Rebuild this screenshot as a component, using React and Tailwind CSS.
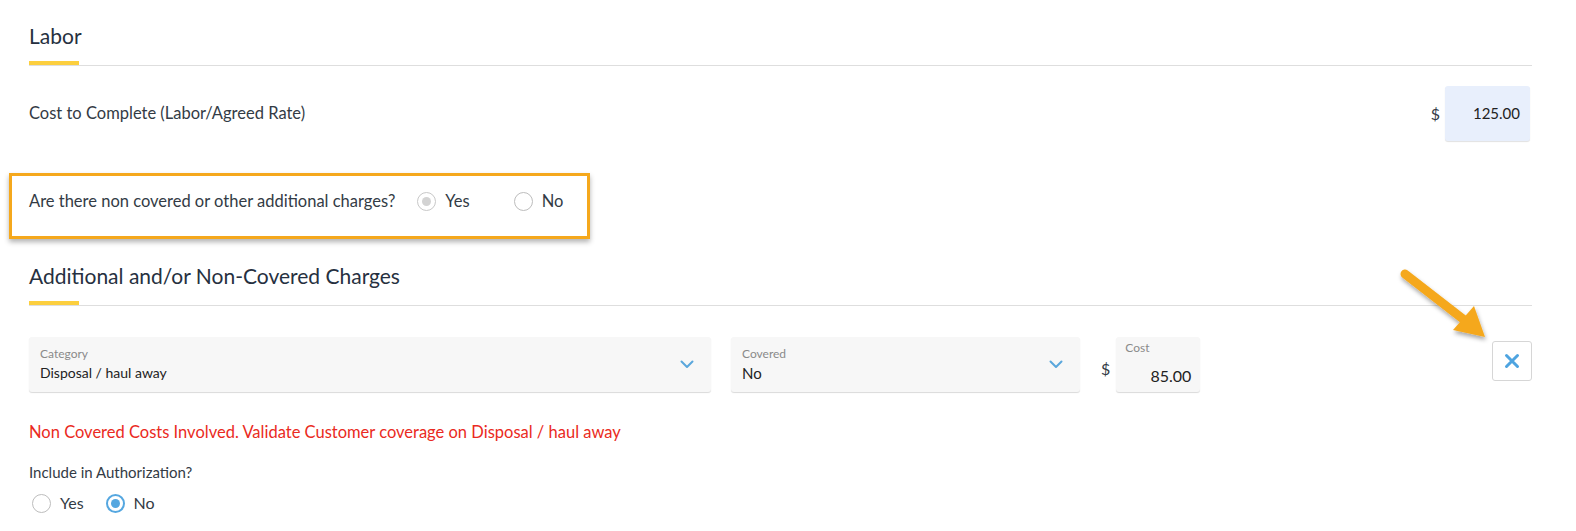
import React from "react";

const font = { fontFamily: "Lato, 'Open Sans', sans-serif" };

function Chevron() {
  return (
    <svg width="14" height="9" viewBox="0 0 14 9" fill="none">
      <path d="M1.5 1.5 L7 7 L12.5 1.5" stroke="#5aa7dc" strokeWidth="2" strokeLinecap="round" strokeLinejoin="round" />
    </svg>
  );
}

function SectionHeader({ title }) {
  return (
    <div>
      <div className="text-[21px] leading-[26px] text-[#263040]">{title}</div>
      <div className="mt-[12px] h-[4px] w-[50px] bg-[#fccf3e]" />
      <div className="h-px bg-[#dedede]" />
    </div>
  );
}

function Radio({ state, label, size }) {
  let circle;
  if (state === "disabled") {
    circle = (
      <span className="flex h-[19px] w-[19px] items-center justify-center rounded-full border-[1.5px] border-[#c8c8c8] bg-white">
        <span className="h-[9px] w-[9px] rounded-full bg-[#d3d3d3]" />
      </span>
    );
  } else if (state === "checked") {
    circle = (
      <span className="flex h-[19px] w-[19px] items-center justify-center rounded-full border-[2px] border-[#55a7e0] bg-white">
        <span className="h-[9px] w-[9px] rounded-full bg-[#55a7e0]" />
      </span>
    );
  } else {
    circle = <span className="h-[19px] w-[19px] rounded-full border-[1.5px] border-[#bdbdbd] bg-white" />;
  }
  return (
    <label className="flex items-center gap-[9px]">
      {circle}
      <span className={size === "lg" ? "text-[16.5px] text-[#333b45]" : "text-[16px] text-[#333b45]"}>{label}</span>
    </label>
  );
}

export default function App() {
  return (
    <div className="relative h-[531px] w-[1576px] overflow-hidden bg-white" style={font}>
      <div className="pl-[29px] pr-[44px] pt-[23px]">
        <SectionHeader title="Labor" />

        <div className="mt-[20px] flex h-[55px] items-center justify-between">
          <span className="text-[16.5px] text-[#333b45]">Cost to Complete (Labor/Agreed Rate)</span>
          <div className="flex items-center gap-[5px] pr-[2px]">
            <span className="text-[16px] text-[#333b45]">$</span>
            <div className="flex h-[55px] w-[85px] items-center justify-end rounded-[3px] bg-[#e8effc] pr-[10px] shadow-[0_1px_1px_rgba(0,0,0,0.12)]">
              <span className="text-[15px] text-[#222]">125.00</span>
            </div>
          </div>
        </div>

        <div className="-ml-[20px] mt-[32px] flex h-[66px] w-[581px] items-center border-[3px] border-[#f5a81c] pb-[9px] pl-[17px] shadow-[0_3px_5px_rgba(0,0,0,0.3)]">
          <span className="text-[16.5px] text-[#333b45]">Are there non covered or other additional charges?</span>
          <div className="ml-[22px] flex items-center gap-[44px]">
            <Radio state="disabled" label="Yes" size="lg" />
            <Radio state="empty" label="No" size="lg" />
          </div>
        </div>

        <div className="mt-[24px]">
          <SectionHeader title="Additional and/or Non-Covered Charges" />
        </div>

        <div className="mt-[31px] flex items-start">
          <div className="flex h-[55px] w-[682px] items-center justify-between rounded-[3px] bg-[#f7f7f7] pl-[11px] pr-[17px] shadow-[0_1px_1px_rgba(0,0,0,0.15)]">
            <div className="flex flex-col">
              <span className="text-[12px] leading-[14px] text-[#8a8a8a]">Category</span>
              <span className="mt-[3px] text-[14px] leading-[18px] text-[#222]">Disposal / haul away</span>
            </div>
            <Chevron />
          </div>
          <div className="ml-[20px] flex h-[55px] w-[349px] items-center justify-between rounded-[3px] bg-[#f7f7f7] pl-[11px] pr-[17px] shadow-[0_1px_1px_rgba(0,0,0,0.15)]">
            <div className="flex flex-col">
              <span className="text-[12px] leading-[14px] text-[#8a8a8a]">Covered</span>
              <span className="mt-[3px] text-[15px] leading-[18px] text-[#222]">No</span>
            </div>
            <Chevron />
          </div>
          <div className="ml-[21px] flex h-[55px] items-center">
            <span className="pt-[9px] text-[16px] text-[#333b45]">$</span>
          </div>
          <div className="ml-[6px] flex h-[55px] w-[84px] flex-col rounded-[3px] bg-[#f7f7f7] px-[9px] pt-[4px] shadow-[0_1px_1px_rgba(0,0,0,0.15)]">
            <span className="text-[12px] leading-[14px] text-[#8a8a8a]">Cost</span>
            <span className="mt-[12px] text-right text-[16px] leading-[18px] text-[#222]">85.00</span>
          </div>
          <div className="flex-1" />
          <button className="mt-[4px] flex h-[40px] w-[40px] items-center justify-center rounded-[3px] border border-[#d6d6d6] bg-white">
            <svg width="16" height="16" viewBox="0 0 16 16">
              <path d="M2.5 2.5 L13.5 13.5 M13.5 2.5 L2.5 13.5" stroke="#4ea4e0" strokeWidth="3" strokeLinecap="round" />
            </svg>
          </button>
        </div>

        <div className="mt-[28px] text-[16.5px] text-[#ea2a22]">
          Non Covered Costs Involved. Validate Customer coverage on Disposal / haul away
        </div>

        <div className="mt-[16px] text-[15px] text-[#333b45]">Include in Authorization?</div>

        <div className="ml-[3px] mt-[8px] flex items-center gap-[22px]">
          <Radio state="empty" label="Yes" />
          <Radio state="checked" label="No" />
        </div>
      </div>

      <svg className="pointer-events-none absolute left-[1395px] top-[262px]" width="100" height="85" viewBox="0 0 100 85">
        <defs>
          <filter id="sh" x="-20%" y="-20%" width="150%" height="150%">
            <feDropShadow dx="1" dy="3" stdDeviation="2" floodColor="#000" floodOpacity="0.35" />
          </filter>
        </defs>
        <g filter="url(#sh)">
          <path d="M10 12 L68 57" stroke="#f5a81c" strokeWidth="9" strokeLinecap="round" />
          <path d="M90 75 L58 68 L79 44 Z" fill="#f5a81c" />
        </g>
      </svg>
    </div>
  );
}
